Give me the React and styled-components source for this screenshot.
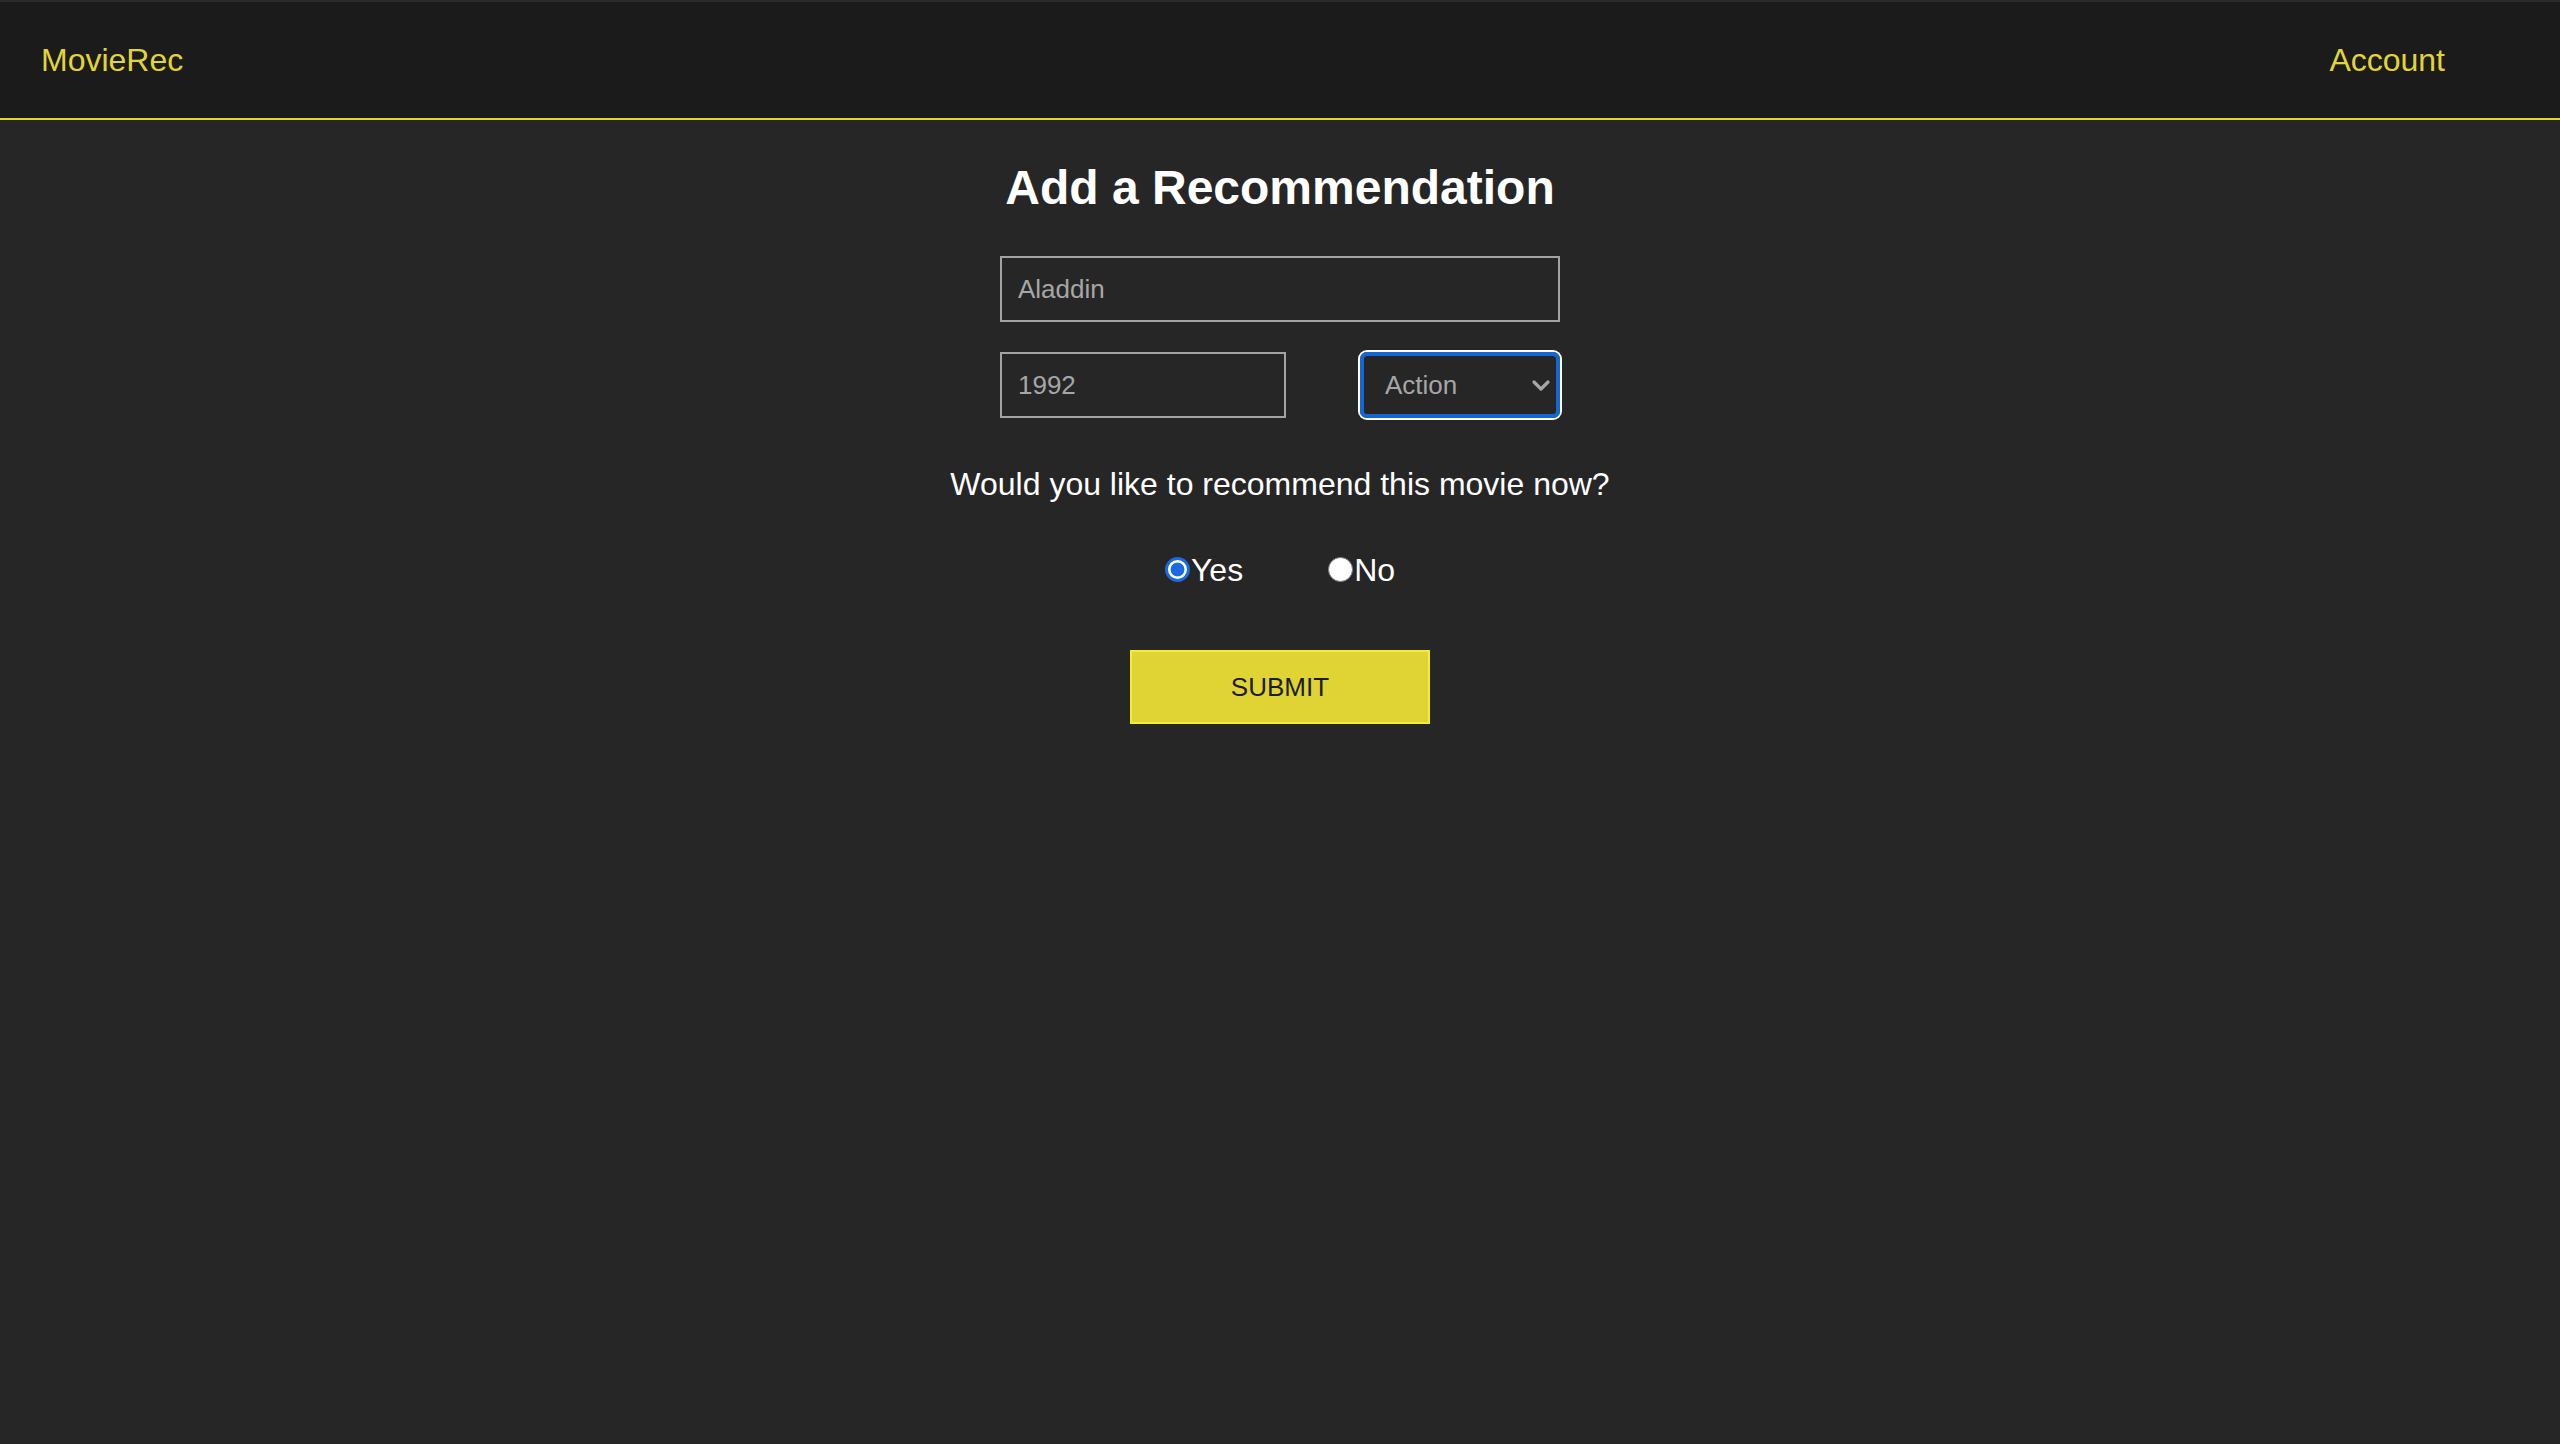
import React, { useState } from "react";
import styled, { createGlobalStyle } from "styled-components";

const Global = createGlobalStyle`
  html, body {
    margin: 0;
    padding: 0;
    background: #262626;
    font-family: "Liberation Sans", Arial, Helvetica, sans-serif;
    min-height: 100%;
  }
  #root { min-height: 1444px; background: #262626; }
  * { box-sizing: border-box; }
`;

const Header = styled.header`
  height: 120px;
  background: #1b1b1b;
  border-top: 2px solid #2b2b2b;
  border-bottom: 2px solid #e1d535;
  display: flex;
  align-items: center;
  justify-content: space-between;
  padding: 0 115px 0 41px;
`;

const NavLink = styled.a`
  color: #e1d535;
  font-size: 32px;
  line-height: 37px;
  text-decoration: none;
  cursor: pointer;
`;

const Main = styled.main`
  display: flex;
  flex-direction: column;
  align-items: center;
`;

const Title = styled.h1`
  margin: 40px 0 0;
  font-size: 48px;
  line-height: 56px;
  font-weight: 700;
  color: #ffffff;
`;

const Form = styled.form`
  display: flex;
  flex-direction: column;
  align-items: center;
  margin-top: 40px;
`;

const Fields = styled.div`
  width: 560px;
  display: flex;
  flex-direction: column;
  gap: 30px;
`;

const Row = styled.div`
  display: flex;
  justify-content: space-between;
  align-items: center;
`;

const TextInput = styled.input`
  width: ${(p) => p.$w || 560}px;
  height: 66px;
  background: transparent;
  border: 2px solid #a3a3a3;
  border-radius: 0;
  padding: 0 16px;
  color: #a6a6a6;
  font-family: "Liberation Sans", Arial, sans-serif;
  font-size: 26px;
  outline: none;
`;

const SelectWrap = styled.div`
  position: relative;
  width: 200px;
  height: 66px;
`;

const Select = styled.select`
  appearance: none;
  -webkit-appearance: none;
  width: 100%;
  height: 100%;
  background: transparent;
  border: 4px solid #1567d3;
  border-radius: 7px;
  box-shadow: 0 0 0 2px #ffffff;
  padding: 0 40px 0 21px;
  color: #a6a6a6;
  font-family: "Liberation Sans", Arial, sans-serif;
  font-size: 26px;
  outline: none;
`;

const Chevron = styled.svg`
  position: absolute;
  right: 9px;
  top: 27px;
  width: 20px;
  height: 14px;
  pointer-events: none;
`;

const Question = styled.p`
  margin: 48px 0 0;
  text-align: center;
  white-space: nowrap;
  color: #ffffff;
  font-size: 32px;
  line-height: 37px;
`;

const RadioGroup = styled.div`
  display: flex;
  justify-content: center;
  gap: 85px;
  margin-top: 49px;
`;

const RadioLabel = styled.label`
  display: flex;
  align-items: center;
  color: #ffffff;
  font-size: 32px;
  line-height: 37px;
  cursor: pointer;
`;

const Radio = styled.input`
  appearance: none;
  -webkit-appearance: none;
  width: 25px;
  height: 25px;
  margin: 0 1px 3px 0;
  border-radius: 50%;
  border: 1.5px solid #7a7a7a;
  background: #ffffff;
  &:checked {
    border: 3px solid #1a6be0;
    background: radial-gradient(circle at center, #1a6be0 0 6.5px, #ffffff 7.3px);
  }
`;

const SubmitButton = styled.button`
  width: 300px;
  height: 74px;
  margin-top: 61px;
  background: #e0d434;
  border: 2px solid #f6ea35;
  color: #1c1c1c;
  font-family: "Liberation Sans", Arial, sans-serif;
  font-size: 26px;
  cursor: pointer;
`;

export default function App() {
  const [now, setNow] = useState("yes");
  return (
    <>
      <Global />
      <Header>
        <NavLink>MovieRec</NavLink>
        <NavLink>Account</NavLink>
      </Header>
      <Main>
        <Title>Add a Recommendation</Title>
        <Form onSubmit={(e) => e.preventDefault()}>
          <Fields>
            <TextInput defaultValue="Aladdin" />
            <Row>
              <TextInput $w={286} defaultValue="1992" />
              <SelectWrap>
                <Select defaultValue="Action">
                  <option>Action</option>
                  <option>Comedy</option>
                  <option>Drama</option>
                </Select>
                <Chevron viewBox="0 0 20 14">
                  <path d="M3 3 L10 10 L17 3" fill="none" stroke="#a6a6a6" strokeWidth="3.2" strokeLinecap="round" strokeLinejoin="round" />
                </Chevron>
              </SelectWrap>
            </Row>
          </Fields>
          <Question>Would you like to recommend this movie now?</Question>
          <RadioGroup>
            <RadioLabel>
              <Radio type="radio" name="now" checked={now === "yes"} onChange={() => setNow("yes")} />
              Yes
            </RadioLabel>
            <RadioLabel>
              <Radio type="radio" name="now" checked={now === "no"} onChange={() => setNow("no")} />
              No
            </RadioLabel>
          </RadioGroup>
          <SubmitButton type="submit">SUBMIT</SubmitButton>
        </Form>
      </Main>
    </>
  );
}
